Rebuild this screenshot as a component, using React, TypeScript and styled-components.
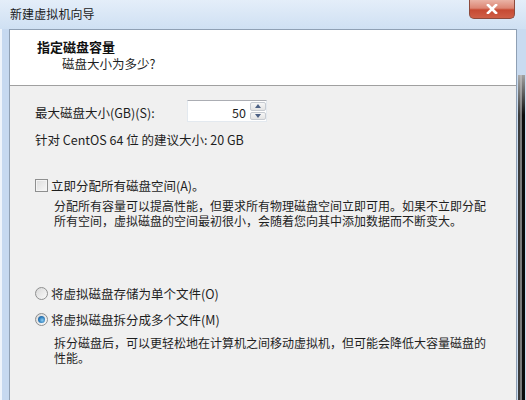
import React from 'react';
import styled, { createGlobalStyle } from 'styled-components';

const GlobalStyle = createGlobalStyle`
  html, body {
    margin: 0;
    padding: 0;
    background: #f0f0f0;
  }
  body {
    font-family: "Noto Sans CJK SC", "Noto Sans", "Liberation Sans", sans-serif;
    color: #1e1e1e;
  }
`;

const Window = styled.div`
  width: 526px;
  height: 400px;
  overflow: hidden;
  display: flex;
  flex-direction: column;
  background: linear-gradient(to bottom, #dae7f5 0%, #c9dbf0 100%);
`;

const TitleBar = styled.div`
  height: 29px;
  display: flex;
  align-items: flex-start;
  justify-content: space-between;
  padding-left: 10px;
  padding-right: 11px;
  background: linear-gradient(to bottom, #e4eef9 0%, #cfe0f3 100%);
`;

const TitleText = styled.div`
  font-size: 12px;
  line-height: 12px;
  margin-top: 8px;
  color: #1a1a1a;
  letter-spacing: 0.1px;
`;

const CloseButton = styled.div`
  width: 46px;
  height: 19px;
  box-sizing: border-box;
  border: 1px solid #8d4a3c;
  border-top: none;
  border-radius: 0 0 5px 5px;
  background: linear-gradient(to bottom, #eab3a6 0%, #dc8674 45%, #c64a33 55%, #cf5f47 100%);
  display: flex;
  align-items: center;
  justify-content: center;
`;

const FrameRow = styled.div`
  flex: 1;
  display: flex;
  min-height: 0;
`;

const LeftFrame = styled.div`
  width: 9px;
  flex-shrink: 0;
  background: linear-gradient(to right, #eef4fb 0 2px, #c6d9f0 2px);
`;

const RightFrame = styled.div`
  width: 9px;
  flex-shrink: 0;
  display: flex;
  flex-direction: column;
  background: #c9dbf0;
`;

const DarkEdge = styled.div`
  margin-top: 46px;
  margin-left: 1px;
  width: 7px;
  flex: 1;
  background:
    linear-gradient(to bottom, rgba(200, 200, 200, 0.8) 0px, rgba(200, 200, 200, 0) 40px),
    linear-gradient(to right, #3a3a3a 0 2px, #7a7a7a 2px 4px, #0b0b0b 4px 7px);
`;

const Client = styled.div`
  flex: 1;
  display: flex;
  flex-direction: column;
  border: 1px solid #8fa0b4;
  border-bottom: none;
  background: #f0f0f0;
`;

const Header = styled.div`
  height: 56px;
  background: #ffffff;
  border-bottom: 1px solid #a0a0a0;
  padding-left: 27px;
  box-sizing: border-box;
`;

const HeaderTitle = styled.div`
  font-size: 13px;
  font-weight: bold;
  line-height: 15px;
  margin-top: 9px;
  color: #111;
`;

const HeaderSub = styled.div`
  font-size: 12.5px;
  line-height: 15px;
  margin-top: 2px;
  padding-left: 25px;
`;

const Body = styled.div`
  padding-left: 25px;
  font-size: 12.5px;
  line-height: 15px;
`;

const SizeRow = styled.div`
  display: flex;
  align-items: center;
  margin-top: 14px;
`;

const SizeLabel = styled.div`
  width: 152px;
  padding-top: 3px;
`;

const Spinner = styled.div`
  display: flex;
  height: 22px;
  width: 80px;
  box-sizing: border-box;
  border: 1px solid #e3e9ef;
  border-top-color: #abadb3;
  background: #fff;
`;

const SpinValue = styled.div`
  flex: 1;
  text-align: right;
  padding-right: 4px;
  padding-top: 4px;
  font-size: 12.5px;
  line-height: 15px;
`;

const SpinButtons = styled.div`
  width: 16px;
  display: flex;
  flex-direction: column;
  gap: 1px;
  padding: 1px 0;
`;

const SpinButton = styled.div`
  flex: 1;
  border: 1px solid #c7cbd1;
  border-radius: 2px;
  background: linear-gradient(to bottom, #f6f6f6, #e4e4e4);
  display: flex;
  align-items: center;
  justify-content: center;
`;

const Hint = styled.div`
  margin-top: 10px;
`;

const OptionRow = styled.div<{ $top: number }>`
  display: flex;
  align-items: center;
  gap: 3px;
  margin-top: ${p => p.$top}px;
`;

const CheckBox = styled.div`
  width: 13px;
  height: 13px;
  box-sizing: border-box;
  border: 1px solid #8e8f8f;
  background: linear-gradient(135deg, #dcdcdc, #f8f8f8);
  box-shadow: inset 0 0 0 1px #f4f4f4;
`;

const Radio = styled.div<{ $checked?: boolean }>`
  width: 13px;
  height: 13px;
  box-sizing: border-box;
  border-radius: 50%;
  border: 1px solid #8e8f8f;
  background: linear-gradient(135deg, #d8d8d8, #fafafa);
  display: flex;
  align-items: center;
  justify-content: center;

  &::after {
    content: '';
    display: ${p => (p.$checked ? 'block' : 'none')};
    width: 7px;
    height: 7px;
    border-radius: 50%;
    background: radial-gradient(circle at 60% 60%, #8ccdf3 0%, #2a79b8 55%, #1c4f86 100%);
  }
`;

const Description = styled.div<{ $top: number }>`
  margin-top: ${p => p.$top}px;
  padding-left: 19px;
  font-size: 12px;
  white-space: nowrap;
`;

const Line = styled.div`
  height: 14.5px;
  line-height: 14.5px;
`;

const Arrow: React.FC<{ up?: boolean }> = ({ up }) => (
  <svg width="6" height="4" viewBox="0 0 6 4">
    <path d={up ? 'M0 4 L3 0 L6 4 Z' : 'M0 0 L3 4 L6 0 Z'} fill="#4d6185" />
  </svg>
);

const App: React.FC = () => {
  return (
    <Window>
      <GlobalStyle />
      <TitleBar>
        <TitleText>新建虚拟机向导</TitleText>
        <CloseButton>
          <svg width="12" height="10" viewBox="0 0 12 10">
            <path d="M2 1 L10 9 M10 1 L2 9" stroke="#ffffff" strokeWidth="2.6" strokeLinecap="square" />
          </svg>
        </CloseButton>
      </TitleBar>
      <FrameRow>
        <LeftFrame />
        <Client>
          <Header>
            <HeaderTitle>指定磁盘容量</HeaderTitle>
            <HeaderSub>磁盘大小为多少?</HeaderSub>
          </Header>
          <Body>
            <SizeRow>
              <SizeLabel>最大磁盘大小(GB)(S):</SizeLabel>
              <Spinner>
                <SpinValue>50</SpinValue>
                <SpinButtons>
                  <SpinButton><Arrow up /></SpinButton>
                  <SpinButton><Arrow /></SpinButton>
                </SpinButtons>
              </Spinner>
            </SizeRow>
            <Hint>针对 CentOS 64 位 的建议大小: 20 GB</Hint>

            <OptionRow $top={31}>
              <CheckBox />
              <span>立即分配所有磁盘空间(A)。</span>
            </OptionRow>
            <Description $top={6}>
              <Line>分配所有容量可以提高性能，但要求所有物理磁盘空间立即可用。如果不立即分配</Line>
              <Line>所有空间，虚拟磁盘的空间最初很小，会随着您向其中添加数据而不断变大。</Line>
            </Description>

            <OptionRow $top={58}>
              <Radio />
              <span>将虚拟磁盘存储为单个文件(O)</span>
            </OptionRow>
            <OptionRow $top={11}>
              <Radio $checked />
              <span>将虚拟磁盘拆分成多个文件(M)</span>
            </OptionRow>
            <Description $top={9}>
              <Line>拆分磁盘后，可以更轻松地在计算机之间移动虚拟机，但可能会降低大容量磁盘的</Line>
              <Line>性能。</Line>
            </Description>
          </Body>
        </Client>
        <RightFrame>
          <DarkEdge />
        </RightFrame>
      </FrameRow>
    </Window>
  );
};

export default App;
